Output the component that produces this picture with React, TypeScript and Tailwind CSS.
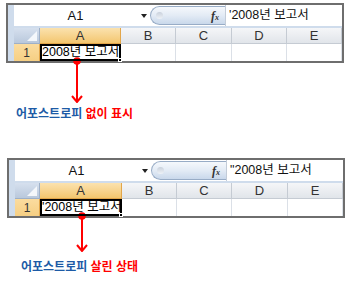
type Col = { label: string; w: number; active?: boolean };

const font = "font-['Liberation_Sans','Noto_Sans_CJK_KR',sans-serif]";

function Sheet({ formula, cell, cols, corner }: { formula: string; cell: string; cols: Col[]; corner: number }) {
  return (
    <div className="w-[338px] h-[60px] border-2 border-[#6e6e6e] bg-[#cfdcec] pl-[6px] flex flex-col">
      {/* formula bar */}
      <div className="h-[21px] flex bg-white items-stretch">
        <div className="w-[136px] flex items-center">
          <div className="flex-1 text-center text-[13px] text-[#111] leading-none pr-[4px]">A1</div>
          <svg width="6" height="4" className="mr-[3px]">
            <polygon points="0,0 6,0 3,4" fill="#222" />
          </svg>
        </div>
        <div className="w-[75px] my-px rounded-l-full border border-r-0 border-[#98acc6] bg-linear-to-b from-[#f5f8fc] via-[#e3ebf5] to-[#c9d8eb] flex items-center pl-[5px] pr-[6px]">
          <div className="w-[7px] h-[7px] rounded-full bg-linear-to-b from-[#c9d1dc] to-[#eef2f7]" />
          <div className="flex-1" />
          <span className="font-['Liberation_Serif',serif] italic font-bold text-[12px] text-[#333] leading-none">
            f<span className="text-[8px]">x</span>
          </span>
        </div>
        <div className="flex-1 border-l border-[#c3ccd8] pl-[3px] flex items-center text-[12.5px] text-[#111] whitespace-pre leading-none">
          {formula}
        </div>
      </div>
      <div className="h-[2px]" />
      {/* column headers */}
      <div className="h-[16px] flex">
        <div
          className="h-full border-r border-b border-[#9eb0c8] bg-linear-to-b from-[#d6e0ee] to-[#b9c8dc] relative"
          style={{ width: corner }}
        >
          <svg width="10" height="10" className="absolute right-[2px] bottom-[2px]">
            <polygon points="10,0 10,10 0,10" fill="#f4f7fb" />
          </svg>
        </div>
        {cols.map((c) => (
          <div
            key={c.label}
            className={
              c.active
                ? "h-full border-r border-b border-[#e2a64a] bg-linear-to-b from-[#fbe2ae] to-[#f3c66e] flex items-center justify-center text-[13px] text-[#333] leading-none"
                : "h-full border-r border-b border-[#c5cbd3] bg-linear-to-b from-[#f5f6f8] to-[#e1e5ea] flex items-center justify-center text-[13px] text-[#333] leading-none"
            }
            style={{ width: c.w }}
          >
            {c.label}
          </div>
        ))}
      </div>
      {/* row 1 */}
      <div className="h-[17px] flex bg-white">
        <div
          className="h-full border-r border-[#e2a64a] bg-linear-to-b from-[#fbdc9f] to-[#f6cf83] flex items-center justify-center text-[12px] text-[#333] leading-none"
          style={{ width: corner }}
        >
          1
        </div>
        {cols.map((c, i) =>
          i === 0 ? (
            <div
              key={c.label}
              className="h-full border-2 border-black relative flex items-center text-[12.5px] text-black whitespace-pre leading-none"
              style={{ width: c.w }}
            >
              {cell}
              <div className="absolute -right-[3px] -bottom-[3px] w-[4px] h-[4px] bg-black border border-white" />
            </div>
          ) : (
            <div key={c.label} className="h-full border-r border-[#dbe0e7]" style={{ width: c.w }} />
          )
        )}
      </div>
    </div>
  );
}

function Pointer({ x, len }: { x: number; len: number }) {
  return (
    <svg width="20" height={len} className="block -mt-[6px]" style={{ marginLeft: x - 10 }}>
      <circle cx="10" cy="4" r="3.8" fill="#ff0000" />
      <line x1="10" y1="4" x2="10" y2={len - 1} stroke="#ff0000" strokeWidth="2" />
      <polyline points={`5,${len - 7} 10,${len - 1} 15,${len - 7}`} fill="none" stroke="#ff0000" strokeWidth="2" />
    </svg>
  );
}

export default function App() {
  return (
    <div className={`w-[349px] h-[283px] bg-white overflow-hidden ${font}`}>
      <div className="pt-[3px] pl-[6px]">
        <Sheet
          formula="'2008년 보고서"
          cell="2008년 보고서"
          corner={26}
          cols={[
            { label: "A", w: 81, active: true },
            { label: "B", w: 55 },
            { label: "C", w: 56 },
            { label: "D", w: 55 },
            { label: "E", w: 55 },
          ]}
        />
      </div>
      <Pointer x={77} len={46} />
      <div className="mt-[3px] pl-[16px] h-[16px] flex items-center text-[12px] font-bold leading-none whitespace-pre">
        <span className="text-[#1d5ba6]">어포스트로피 </span>
        <span className="text-[#ff0000]">없이 표시</span>
      </div>
      <div className="mt-[36px] pl-[7px]">
        <Sheet
          formula={'"2008년 보고서'}
          cell="'2008년 보고서"
          corner={25}
          cols={[
            { label: "A", w: 82, active: true },
            { label: "B", w: 55 },
            { label: "C", w: 55 },
            { label: "D", w: 56 },
            { label: "E", w: 55 },
          ]}
        />
      </div>
      <Pointer x={82} len={40} />
      <div className="mt-[7px] pl-[21px] h-[16px] flex items-center text-[12px] font-bold leading-none whitespace-pre">
        <span className="text-[#1d5ba6]">어포스트로피 </span>
        <span className="text-[#ff0000]">살린 상태</span>
      </div>
    </div>
  );
}
